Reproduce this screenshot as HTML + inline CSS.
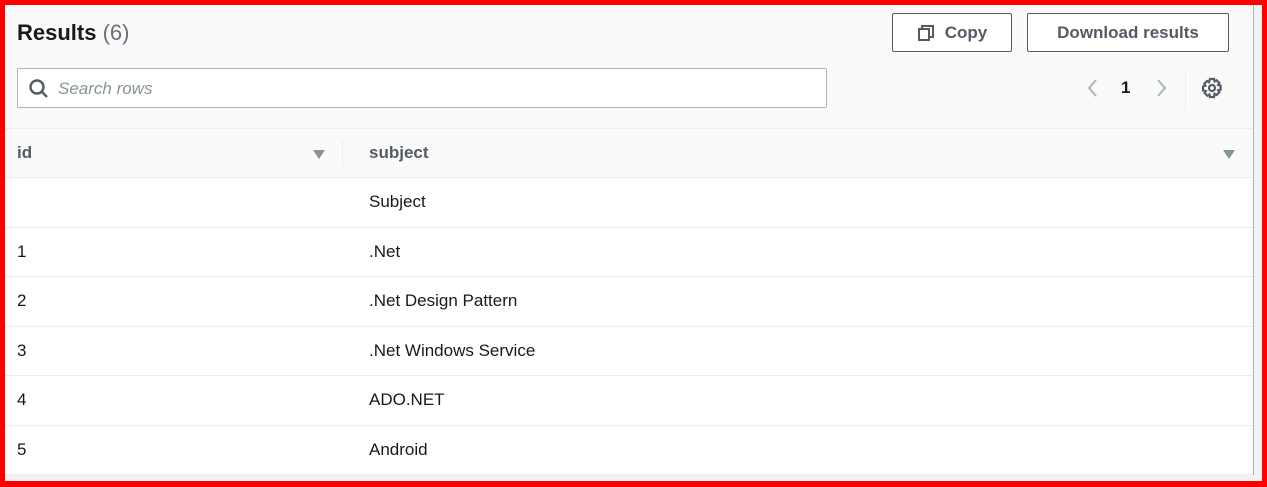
<!DOCTYPE html>
<html><head><style>
*{box-sizing:border-box;margin:0;padding:0}
body{width:1267px;height:487px;background:#f00;font-family:"Liberation Sans",sans-serif;position:relative;overflow:hidden}
.in{position:absolute;left:5px;top:5px;width:1257px;height:476px;background:#f2f3f3}
.panel{position:absolute;left:0;top:0;width:1249px;height:470px;background:#fafafa;border-right:1px solid #aab7b8;border-bottom:1px solid #8d9999}
.t{position:absolute;left:12px;top:15px;font-size:22px;font-weight:bold;color:#16191f}
.t span{font-weight:normal;color:#687078}
.btn{position:absolute;top:8px;height:39px;border:1px solid #545b64;border-radius:2px;background:#fff;color:#545b64;font-weight:bold;font-size:17px;display:flex;align-items:center;justify-content:center}
.search{position:absolute;left:12px;top:63px;width:810px;height:40px;border:1px solid #aab7b8;border-radius:2px;background:#fff}
.search i{position:absolute;left:40px;top:10px;font-style:italic;color:#879596;font-size:17px}
table{position:absolute;left:0;top:123px;width:1248px;border-collapse:collapse;background:#fff}
th{height:49px;text-align:left;font-size:17px;color:#545b64;background:#fafafa;border-top:1px solid #eaeded;border-bottom:1px solid #eaeded;padding-left:12px;position:relative}
td{height:49.5px;font-size:17px;color:#16191f;padding-left:12px;border-bottom:1px solid #eaeded}
td:nth-child(2),th:nth-child(2){padding-left:26px}
.tri{position:absolute;top:21px;width:0;height:0;border-left:6px solid transparent;border-right:6px solid transparent;border-top:9px solid #879596}
</style></head><body><div class="in"><div class="panel">
<div class="t">Results <span>(6)</span></div>
<div class="btn" style="left:887px;width:120px"><svg width="18" height="18" viewBox="0 0 18 18" style="margin-right:10px" fill="none" stroke="#545b64" stroke-width="2"><rect x="2" y="5" width="10" height="11"/><path d="M5 5V2h11v11h-4"/></svg>Copy</div>
<div class="btn" style="left:1022px;width:202px">Download results</div>
<div class="search"><svg width="22" height="22" viewBox="0 0 22 22" style="position:absolute;left:10px;top:9px" fill="none" stroke="#545b64" stroke-width="2.4"><circle cx="9" cy="9" r="6.5"/><path d="M14 14l5 5"/></svg><i>Search rows</i></div>
<svg width="20" height="24" style="position:absolute;left:1078px;top:71px" fill="none" stroke="#aab7b8" stroke-width="2"><path d="M13 4L6 12l7 8"/></svg>
<div style="position:absolute;left:1116px;top:73px;font-size:17px;font-weight:bold;color:#16191f">1</div>
<svg width="20" height="24" style="position:absolute;left:1146px;top:71px" fill="none" stroke="#aab7b8" stroke-width="2"><path d="M7 4l7 8-7 8"/></svg>
<div style="position:absolute;left:1180px;top:66px;width:1px;height:40px;background:#eaeded"></div>
<svg width="24" height="24" viewBox="0 0 24 24" style="position:absolute;left:1195px;top:71px" fill="none" stroke="#545b64" stroke-width="2.2"><circle cx="12" cy="12" r="3"/><path d="M10 3h4l.6 2.4 2-1.2 2.8 2.8-1.2 2 2.4.6v4l-2.4.6 1.2 2-2.8 2.8-2-1.2L14 21h-4l-.6-2.4-2 1.2-2.8-2.8 1.2-2L3 14.4v-4l2.4-.6-1.2-2 2.8-2.8 2 1.2z"/></svg>
<table>
<tr><th style="width:338px">id<div class="tri" style="left:308px"></div><div style="position:absolute;right:0;top:12px;width:1px;height:25px;background:#eaeded"></div></th><th>subject<div class="tri" style="left:1218px;margin-left:-338px"></div></th></tr>
<tr><td></td><td>Subject</td></tr>
<tr><td>1</td><td>.Net</td></tr>
<tr><td>2</td><td>.Net Design Pattern</td></tr>
<tr><td>3</td><td>.Net Windows Service</td></tr>
<tr><td>4</td><td>ADO.NET</td></tr>
<tr><td>5</td><td>Android</td></tr>
</table>
</div></div></body></html>
